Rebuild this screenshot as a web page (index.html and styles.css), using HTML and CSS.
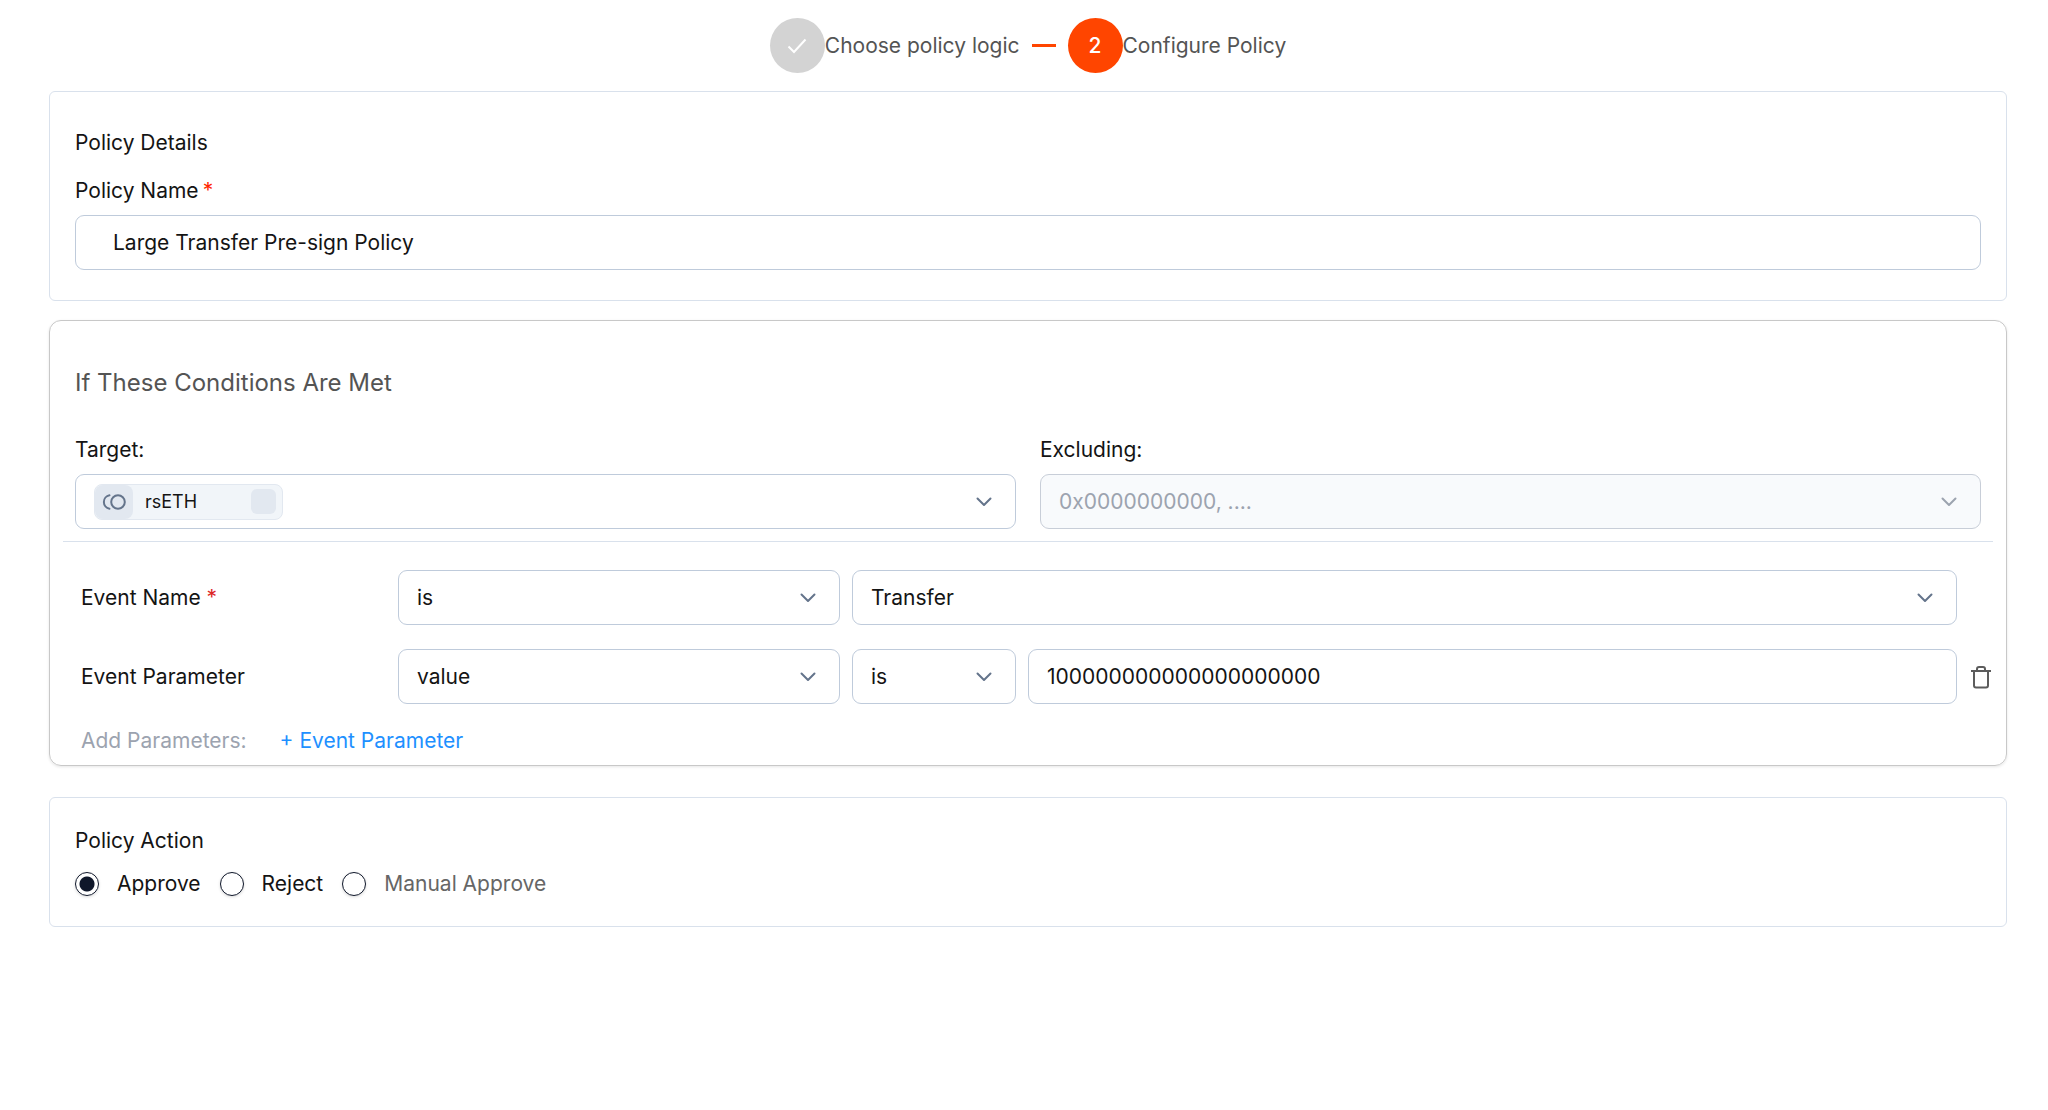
FILE: index.html
```html
<!DOCTYPE html>
<html lang="en">
<head>
<meta charset="utf-8">
<meta name="viewport" content="width=device-width, initial-scale=1">
<title>Configure Policy</title>
<link rel="stylesheet" href="styles.css">
</head>
<body>
<svg class="sprite" aria-hidden="true">
  <symbol id="chevron" viewBox="0 0 16 10"><path d="M1.5 1.5 8 8l6.500-6.500" fill="none" stroke="currentColor" stroke-width="2" stroke-linecap="round" stroke-linejoin="round"/></symbol>
</svg>
<form class="page">
  <ol class="stepper">
    <li class="step">
      <span class="step-badge done">
        <svg width="20" height="16" viewBox="0 0 20 16" aria-hidden="true"><path d="M1.500 8.500 7 14 18.500 1.500" fill="none" stroke="currentColor" stroke-width="2"/></svg>
      </span>
      <span>Choose policy logic</span>
    </li>
    <li class="step-line" aria-hidden="true"></li>
    <li class="step" aria-current="step">
      <span class="step-badge current">2</span>
      <span>Configure Policy</span>
    </li>
  </ol>

  <section class="card details">
    <h2 class="title">Policy Details</h2>
    <label class="label" for="policy-name">Policy Name<span class="required tight">*</span></label>
    <input class="control wide-inset" id="policy-name" type="text" value="Large Transfer Pre-sign Policy">
  </section>

  <section class="card conditions">
    <h2 class="heading">If These Conditions Are Met</h2>
    <div class="targets">
      <div class="field">
        <label class="label" for="target">Target:</label>
        <button class="control picker" id="target" type="button">
          <span class="chip">
            <span class="chip-icon">
              <svg width="24" height="16" viewBox="0 0 24 16" aria-hidden="true"><g fill="none" stroke="currentColor" stroke-width="2"><circle cx="16" cy="8" r="6.800"/><path d="M7.500 1.300A6.800 6.800 0 0 0 7.500 14.700" stroke-linecap="round"/></g></svg>
            </span>
            <span class="chip-text">rsETH</span>
            <span class="chip-remove"></span>
          </span>
          <svg class="chevron" aria-hidden="true"><use href="#chevron"/></svg>
        </button>
      </div>
      <div class="field">
        <label class="label" for="excluding">Excluding:</label>
        <div class="select">
          <select class="control" id="excluding" disabled><option>0x0000000000, ....</option></select>
          <svg class="chevron" aria-hidden="true"><use href="#chevron"/></svg>
        </div>
      </div>
    </div>
    <hr class="divider">
    <div class="rule">
      <label class="label" for="event-op">Event Name <span class="required">*</span></label>
      <div class="select">
        <select class="control" id="event-op"><option>is</option></select>
        <svg class="chevron" aria-hidden="true"><use href="#chevron"/></svg>
      </div>
      <div class="select">
        <select class="control" aria-label="Event"><option>Transfer</option></select>
        <svg class="chevron" aria-hidden="true"><use href="#chevron"/></svg>
      </div>
    </div>
    <div class="rule">
      <label class="label" for="event-param">Event Parameter</label>
      <div class="select">
        <select class="control" id="event-param"><option>value</option></select>
        <svg class="chevron" aria-hidden="true"><use href="#chevron"/></svg>
      </div>
      <div class="comparison">
        <div class="select">
          <select class="control" aria-label="Operator"><option>is</option></select>
          <svg class="chevron" aria-hidden="true"><use href="#chevron"/></svg>
        </div>
        <input class="control" type="text" aria-label="Value" value="100000000000000000000">
      </div>
      <button class="delete" type="button" aria-label="Delete parameter">
        <svg width="20" height="24" viewBox="0 0 20 24" aria-hidden="true"><g fill="none" stroke="currentColor" stroke-width="2" stroke-linejoin="round"><path d="M0 6h20"/><path d="M3 6v14.500a2 2 0 0 0 2 2h10a2 2 0 0 0 2-2V6"/><path d="M6 6V4a2 2 0 0 1 2-2h4a2 2 0 0 1 2 2v2"/></g></svg>
      </button>
    </div>
    <div class="add">
      <span>Add Parameters:</span>
      <button class="add-button" type="button">+ Event Parameter</button>
    </div>
  </section>

  <fieldset class="card action">
    <legend class="title">Policy Action</legend>
    <div class="options">
      <label class="option"><input type="radio" name="action" checked>Approve</label>
      <label class="option"><input type="radio" name="action">Reject</label>
      <label class="option muted"><input type="radio" name="action">Manual Approve</label>
    </div>
  </fieldset>
</form>
</body>
</html>
```
FILE: styles.css
```css
* {
  box-sizing: border-box;
}

body {
  margin: 0;
  background: #fff;
  color: #141414;
  font: 400 21px/32px Inter, "Liberation Sans", sans-serif;
}

button,
input,
select {
  margin: 0;
  color: inherit;
  font: inherit;
}

.sprite {
  display: none;
}

.page {
  padding: 18px 41px 18px 49px;
}

/* Stepper */
.stepper {
  display: flex;
  align-items: center;
  justify-content: center;
  gap: 12px;
  margin: 0 0 18px;
  padding: 0;
  color: #545454;
  list-style: none;
}

.step {
  display: flex;
  align-items: center;
}

.step-badge {
  display: grid;
  place-items: center;
  width: 55px;
  height: 55px;
  border-radius: 50%;
  color: #fff;
  font-weight: 500;
}

.done {
  background: #d3d3d3;
}

.current {
  background: #ff4500;
}

.step-line {
  width: 24px;
  height: 3px;
  background: #ff4500;
}

/* Cards */
.card {
  margin: 0;
  border: 1px solid #d9e1ec;
  border-radius: 6px;
}

.title,
.heading {
  margin: 0;
  padding: 0;
  font-size: 21px;
  font-weight: 400;
}

.details {
  padding: 35px 25px 30px;
  margin-bottom: 19px;
}

.details .title {
  margin-bottom: 16px;
}

.label {
  display: block;
}

.details .label,
.field .label {
  margin-bottom: 8px;
}

.required {
  color: #dc2626;
}

.tight {
  margin-left: 4px;
  color: #ff2600;
}

/* Form controls */
.control {
  display: block;
  width: 100%;
  height: 55px;
  padding: 0 18px;
  border: 1px solid #bfcbdb;
  border-radius: 9px;
  outline: none;
  background: #fff;
  appearance: none;
}

.wide-inset {
  padding: 0 37px;
}

.select {
  display: grid;
  align-items: center;
}

.select > * {
  grid-area: 1 / 1;
}

.chevron {
  justify-self: end;
  width: 16px;
  height: 10px;
  margin-right: 24px;
  color: #64748b;
  pointer-events: none;
}

.control:disabled {
  border-color: #c8ced8;
  background: #f8fafc;
  color: #9ca3af;
  opacity: 1;
}

.control:disabled + .chevron {
  color: #9ca3af;
}

/* Conditions */
.conditions {
  padding: 2px 13px 0;
  margin-bottom: 31px;
  border-color: #c8c8c8;
  border-radius: 12px;
  box-shadow: 0 1px 3px rgba(0, 0, 0, 0.1);
}

.heading {
  margin: 44px 12px 35px;
  color: #545454;
  font-size: 24px;
}

.targets {
  display: grid;
  grid-template-columns: 1fr 1fr;
  gap: 24px;
  padding: 0 12px 12px;
}

.picker {
  display: flex;
  align-items: center;
  justify-content: space-between;
}

.picker .chevron {
  margin-right: 5px;
}

.chip {
  display: flex;
  align-items: center;
  width: 189px;
  height: 36px;
  padding-right: 6px;
  border: 1px solid #e2e8f0;
  border-radius: 8px;
  background: #f1f5f9;
}

.chip-icon {
  display: grid;
  place-items: center;
  width: 38px;
  height: 34px;
  border-radius: 8px;
  background: #e2e8f0;
  color: #64748b;
}

.chip-text {
  flex: 1;
  margin-left: 12px;
  font-size: 18px;
  text-align: left;
}

.chip-remove {
  width: 25px;
  height: 25px;
  border-radius: 6px;
  background: #e2e8f0;
}

.divider {
  height: 1px;
  margin: 0 0 28px;
  border: 0;
  background: #d9e1ec;
}

.rule {
  display: grid;
  grid-template-columns: 305px 2fr 5fr 24px;
  gap: 12px;
  align-items: center;
  margin-bottom: 24px;
  padding-left: 18px;
}

.comparison {
  display: grid;
  grid-template-columns: 3fr 17fr;
  gap: 12px;
}

.delete {
  display: grid;
  place-items: center;
  padding: 0;
  border: 0;
  background: none;
  color: #5c5c5c;
}

.add {
  display: flex;
  gap: 33px;
  margin: -3px 0 8px 18px;
  color: #9ca3af;
}

.add-button {
  padding: 0;
  border: 0;
  background: none;
  color: #1e90ff;
}

/* Action */
.action {
  padding: 27px 25px 26px;
}

.action .title {
  float: left;
  width: 100%;
  margin-bottom: 11px;
}

.options {
  display: flex;
  clear: both;
  gap: 19px;
}

.option {
  display: flex;
  align-items: center;
  gap: 18px;
}

.option input {
  width: 24px;
  height: 24px;
  border: 1px solid #0f172a;
  border-radius: 50%;
  background: #fff;
  box-shadow: 0 1px 3px rgba(0, 0, 0, 0.15);
  appearance: none;
}

.option input:checked {
  background: radial-gradient(circle, #0f172a 7px, #fff 8px);
}

.muted {
  color: #666;
}
```
